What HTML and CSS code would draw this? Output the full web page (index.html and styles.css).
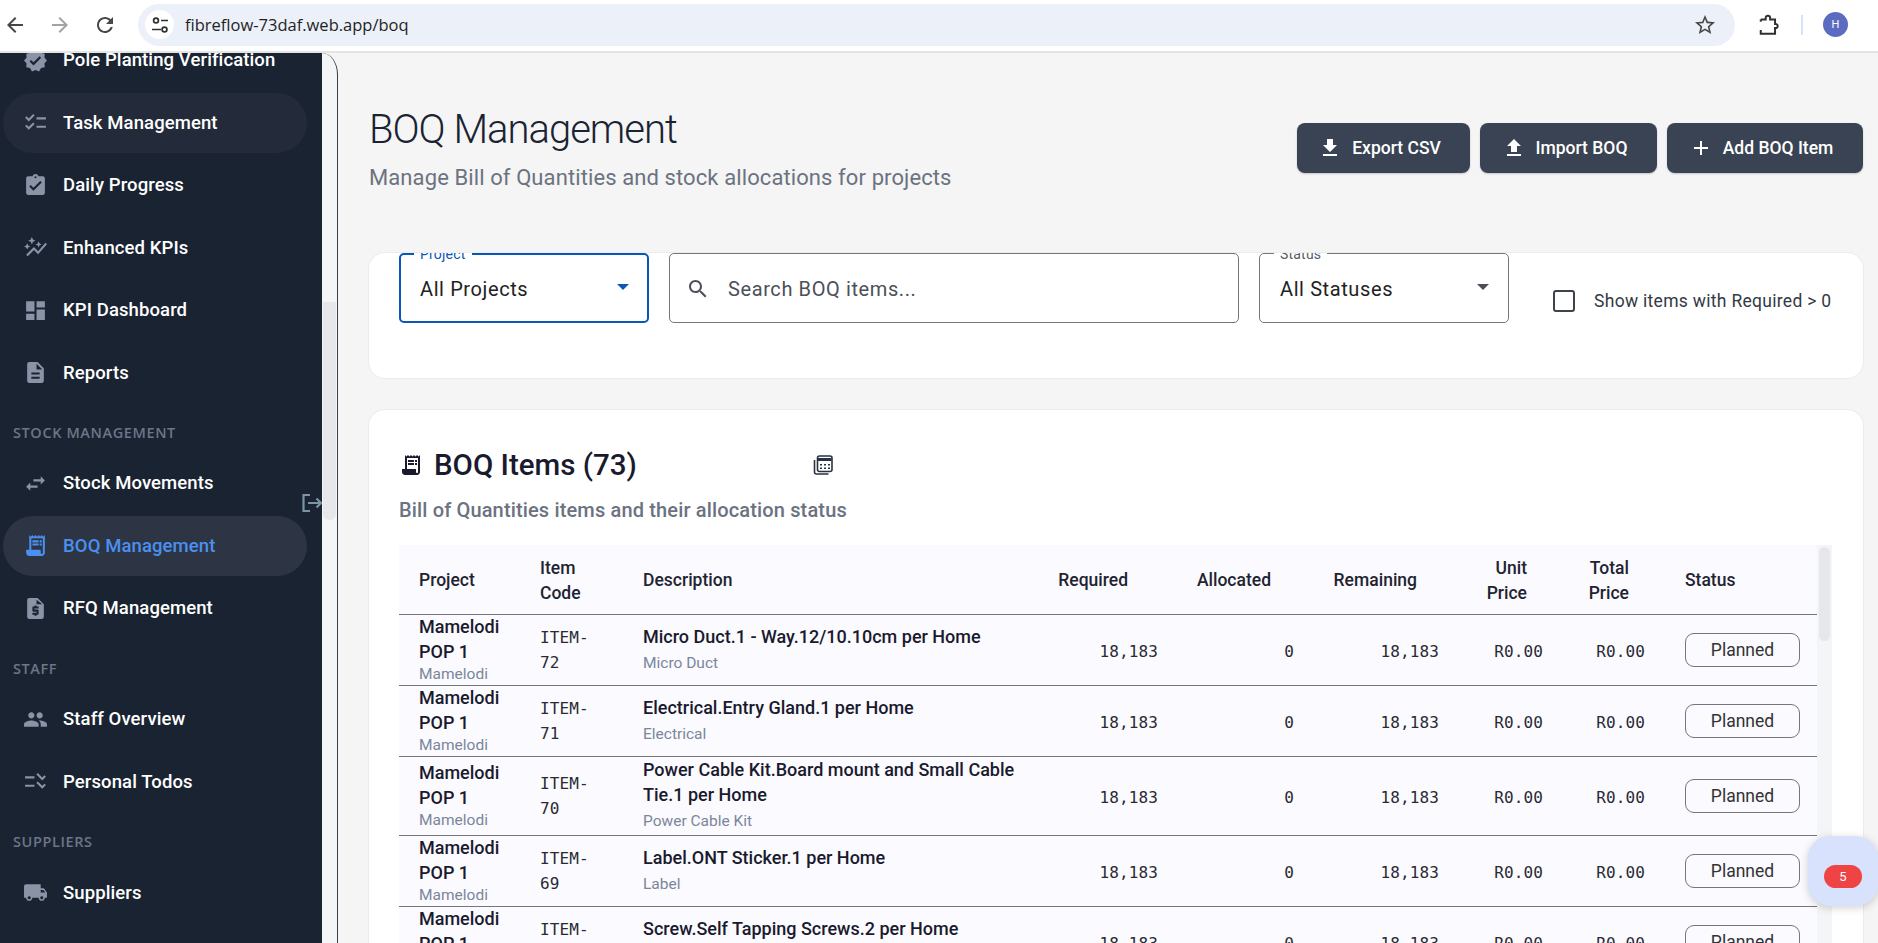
FILE: index.html
```html
<!DOCTYPE html>
<html lang="en">
<head>
<meta charset="utf-8">
<title>BOQ Management</title>
<link rel="stylesheet" href="styles.css">
</head>
<body>
<svg class="defs" width="0" height="0" aria-hidden="true">
  <symbol id="i-verified" viewBox="0 0 24 24"><path d="M23 12l-2.44-2.79.34-3.69-3.61-.82-1.89-3.2L12 2.96 8.6 1.5 6.71 4.69 3.1 5.5l.34 3.7L1 12l2.44 2.79-.34 3.7 3.61.82L8.6 22.5l3.4-1.47 3.4 1.46 1.89-3.19 3.61-.82-.34-3.69L23 12zm-12.91 4.72l-3.8-3.81 1.48-1.48 2.32 2.33 5.85-5.87 1.48 1.48-7.33 7.35z"/></symbol>
  <symbol id="i-checklist" viewBox="0 0 24 24"><path d="M22 7h-9v2h9V7zm0 8h-9v2h9v-2zM5.54 11 2 7.46l1.41-1.41 2.12 2.12 4.24-4.24 1.41 1.41L5.54 11zm0 8L2 15.46l1.41-1.41 2.12 2.12 4.24-4.24 1.41 1.41L5.54 19z"/></symbol>
  <symbol id="i-checklist-rtl" viewBox="0 0 24 24"><path transform="matrix(-1 0 0 1 24 0)" d="M22 7h-9v2h9V7zm0 8h-9v2h9v-2zM5.54 11 2 7.46l1.41-1.41 2.12 2.12 4.24-4.24 1.41 1.41L5.54 11zm0 8L2 15.46l1.41-1.41 2.12 2.12 4.24-4.24 1.41 1.41L5.54 19z"/></symbol>
  <symbol id="i-assign" viewBox="0 0 24 24"><path d="M19 3h-4.18C14.4 1.84 13.3 1 12 1c-1.3 0-2.4.84-2.82 2H5c-1.1 0-2 .9-2 2v14c0 1.1.9 2 2 2h14c1.1 0 2-.9 2-2V5c0-1.1-.9-2-2-2zm-7 0c.55 0 1 .45 1 1s-.45 1-1 1-1-.45-1-1 .45-1 1-1zm-2 14l-4-4 1.41-1.41L10 14.17l6.59-6.59L18 9l-8 8z"/></symbol>
  <symbol id="i-graph" viewBox="0 0 24 24"><path d="M14.06 9.94 12 9l2.06-.94L15 6l.94 2.06L18 9l-2.06.94L15 12zM4 14l.94-2.06L7 11l-2.06-.94L4 8l-.94 2.06L1 11l2.06.94zm4.5-5 1.09-2.41L12 5.5 9.59 4.41 8.5 2 7.41 4.41 5 5.5l2.41 1.09zm-4 11.5 6-6.01 4 4L23 8.93l-1.41-1.41-7.09 7.97-4-4L3 19z"/></symbol>
  <symbol id="i-dash" viewBox="0 0 24 24"><path d="M3 13h8V3H3v10zm0 8h8v-6H3v6zm10 0h8V11h-8v10zm0-18v6h8V3h-8z"/></symbol>
  <symbol id="i-doc" viewBox="0 0 24 24"><path d="M14 2H6c-1.1 0-1.99.9-1.99 2L4 20c0 1.1.89 2 1.99 2H18c1.1 0 2-.9 2-2V8l-6-6zm2 16H8v-2h8v2zm0-4H8v-2h8v2zm-3-5V3.5L18.5 9H13z"/></symbol>
  <symbol id="i-swap" viewBox="0 0 24 24"><path d="M6.99 11 3 15l3.99 4v-3H14v-2H6.99v-3zM21 9l-3.99-4v3H10v2h7.01v3L21 9z"/></symbol>
  <symbol id="i-receipt" viewBox="0 0 24 24"><path d="M19.5 3.5 18 2l-1.5 1.5L15 2l-1.5 1.5L12 2l-1.5 1.5L9 2 7.5 3.5 6 2v14H3v3c0 1.66 1.34 3 3 3h12c1.66 0 3-1.34 3-3V2l-1.5 1.5zM19 19c0 .55-.45 1-1 1s-1-.45-1-1v-3H8V5h11v14z"/><path d="M9 7h6v2H9zm7 0h2v2h-2zm-7 3h6v2H9zm7 0h2v2h-2z"/></symbol>
  <symbol id="i-quote" viewBox="0 0 24 24"><path d="M14 2H6c-1.1 0-1.99.9-1.99 2L4 20c0 1.1.89 2 1.99 2H18c1.1 0 2-.9 2-2V8l-6-6zm1 10h-4v1h3c.55 0 1 .45 1 1v3c0 .55-.45 1-1 1h-1v1h-2v-1H9v-2h4v-1h-3c-.55 0-1-.45-1-1v-3c0-.55.45-1 1-1h1V9h2v1h2v2zm-2-4V3.5L18.5 8H13z"/></symbol>
  <symbol id="i-people" viewBox="0 0 24 24"><path d="M16 11c1.66 0 2.99-1.34 2.99-3S17.66 5 16 5c-1.66 0-3 1.34-3 3s1.34 3 3 3zm-8 0c1.66 0 2.99-1.34 2.99-3S9.66 5 8 5C6.34 5 5 6.34 5 8s1.34 3 3 3zm0 2c-2.33 0-7 1.17-7 3.5V19h14v-2.5c0-2.33-4.67-3.5-7-3.5zm8 0c-.29 0-.62.02-.97.05 1.16.84 1.97 1.97 1.97 3.45V19h6v-2.5c0-2.33-4.67-3.5-7-3.5z"/></symbol>
  <symbol id="i-truck" viewBox="0 0 24 24"><path d="M20 8h-3V4H3c-1.1 0-2 .9-2 2v11h2c0 1.66 1.34 3 3 3s3-1.34 3-3h6c0 1.66 1.34 3 3 3s3-1.34 3-3h2v-5l-3-4zM6 18.5c-.83 0-1.5-.67-1.5-1.5s.67-1.5 1.5-1.5 1.5.67 1.5 1.5-.67 1.5-1.5 1.5zm13.5-9 1.96 2.5H17V9.5h2.5zm-1.5 9c-.83 0-1.5-.67-1.5-1.5s.67-1.5 1.5-1.5 1.5.67 1.5 1.5-.67 1.5-1.5 1.5z"/></symbol>
</svg>

<header class="browser">
  <svg class="nav-icon" viewBox="0 0 24 24"><path d="M20 11H7.83l5.59-5.59L12 4l-8 8 8 8 1.41-1.41L7.83 13H20v-2z"/></svg>
  <svg class="nav-icon nav-off" viewBox="0 0 24 24"><path d="M4 11h12.17l-5.59-5.59L12 4l8 8-8 8-1.41-1.41L16.17 13H4v-2z"/></svg>
  <svg class="nav-icon" viewBox="0 0 24 24"><path d="M17.65 6.35C16.2 4.9 14.21 4 12 4c-4.42 0-7.99 3.58-7.99 8s3.57 8 7.99 8c3.73 0 6.84-2.55 7.73-6h-2.08c-.82 2.33-3.04 4-5.65 4-3.31 0-6-2.69-6-6s2.69-6 6-6c1.66 0 3.14.69 4.22 1.78L13 11h7V4l-2.35 2.35z"/></svg>
  <div class="omnibox">
    <span class="tune">
      <svg viewBox="0 0 20 20" width="20" height="20"><circle cx="6" cy="5.5" r="2.4"/><path d="M11 5.5h7M2 14.5h9"/><circle cx="14.5" cy="14.5" r="2.4"/></svg>
    </span>
    <span class="url">fibreflow-73daf.web.app/boq</span>
    <svg class="star" viewBox="0 0 24 24"><path d="M22 9.24l-7.19-.62L12 2 9.19 8.63 2 9.24l5.46 4.73L5.82 21 12 17.27 18.18 21l-1.63-7.03L22 9.24zM12 15.4l-3.76 2.27 1-4.28-3.32-2.88 4.38-.38L12 6.1l1.71 4.04 4.38.38-3.32 2.88 1 4.28L12 15.4z"/></svg>
  </div>
  <svg class="ext" viewBox="0 0 20 20"><path d="M2.500 5H7V3.500a2 2 0 0 1 4 0V5h4.500v4.200h1.300a2 2 0 0 1 0 3.600h-1.300V18h-13v-3.500"/><path d="M2.500 5v2"/></svg>
  <span class="divider"></span>
  <span class="avatar">H</span>
</header>

<div class="app">
  <aside class="sidebar">
    <nav class="nav">
      <a class="item"><svg class="ico"><use href="#i-verified"/></svg>Pole Planting Verification</a>
      <a class="item hover"><svg class="ico"><use href="#i-checklist"/></svg>Task Management</a>
      <a class="item"><svg class="ico"><use href="#i-assign"/></svg>Daily Progress</a>
      <a class="item"><svg class="ico"><use href="#i-graph"/></svg>Enhanced KPIs</a>
      <a class="item"><svg class="ico"><use href="#i-dash"/></svg>KPI Dashboard</a>
      <a class="item"><svg class="ico"><use href="#i-doc"/></svg>Reports</a>
      <div class="section">STOCK MANAGEMENT</div>
      <a class="item"><svg class="ico"><use href="#i-swap"/></svg>Stock Movements</a>
      <a class="item active"><svg class="ico"><use href="#i-receipt"/></svg>BOQ Management</a>
      <a class="item"><svg class="ico"><use href="#i-quote"/></svg>RFQ Management</a>
      <div class="section">STAFF</div>
      <a class="item"><svg class="ico"><use href="#i-people"/></svg>Staff Overview</a>
      <a class="item"><svg class="ico"><use href="#i-checklist-rtl"/></svg>Personal Todos</a>
      <div class="section">SUPPLIERS</div>
      <a class="item"><svg class="ico"><use href="#i-truck"/></svg>Suppliers</a>
    </nav>
    <svg class="collapse" viewBox="0 0 20 20"><path d="M8 2H1.500v16H8M6 10h13M14.500 5.500 19 10l-4.500 4.500"/></svg>
  </aside>
  <div class="gutter"><span class="gutter-thumb"></span></div>

  <main class="main">
    <section class="page-head">
      <div>
        <h1 class="title">BOQ Management</h1>
        <p class="subtitle">Manage Bill of Quantities and stock allocations for projects</p>
      </div>
      <div class="actions">
        <button class="btn btn-export"><svg viewBox="0 0 24 24"><path d="M19 9h-4V3H9v6H5l7 7 7-7zM5 18v2h14v-2H5z"/></svg>Export CSV</button>
        <button class="btn btn-import"><svg viewBox="0 0 24 24"><path d="M9 16h6v-6h4l-7-7-7 7h4zm-4 2h14v2H5z"/></svg>Import BOQ</button>
        <button class="btn btn-add"><svg viewBox="0 0 24 24"><path d="M19 13h-6v6h-2v-6H5v-2h6V5h2v6h6v2z"/></svg>Add BOQ Item</button>
      </div>
    </section>

    <section class="card filters">
      <div class="field focused">
        <label class="field-label">Project</label>
        <span class="field-value">All Projects</span>
        <span class="caret"></span>
      </div>
      <div class="field search">
        <svg viewBox="0 0 24 24"><path d="M15.500 14h-.79l-.28-.27C15.410 12.590 16 11.110 16 9.500 16 5.910 13.090 3 9.500 3S3 5.910 3 9.500 5.910 16 9.500 16c1.610 0 3.090-.59 4.230-1.570l.27.28v.79l5 4.990L20.490 19l-4.990-5zm-6 0C7.010 14 5 11.990 5 9.500S7.010 5 9.500 5 14 7.010 14 9.500 11.990 14 9.500 14z"/></svg>
        <span class="placeholder">Search BOQ items...</span>
      </div>
      <div class="field">
        <label class="field-label">Status</label>
        <span class="field-value">All Statuses</span>
        <span class="caret"></span>
      </div>
      <div class="check">
        <span class="box"></span>
        <span>Show items with Required &gt; 0</span>
      </div>
    </section>

    <section class="card items">
      <div class="items-head">
        <svg class="book"><use href="#i-receipt"/></svg>
        <h2>BOQ Items (73)</h2>
        <svg class="calc" viewBox="0 0 20 20"><path class="calc-back" d="M1.500 5v12a2 2 0 0 0 2 2h12"/><rect class="calc-body" x="4.500" y="1" width="14.500" height="15.500" rx="2"/><path class="calc-band" d="M5 4.500h13.500"/><path class="calc-keys" d="M7 9h2v1.500H7zM11 9h2v1.500h-2zM15 9h2v1.500h-2zM7 12.500h2V14H7zM11 12.500h2V14h-2zM15 12.500h2V14h-2z"/></svg>
      </div>
      <p class="items-sub">Bill of Quantities items and their allocation status</p>
      <div class="table-wrap">
        <table class="boq">
          <colgroup>
            <col class="c-project"><col class="c-code"><col class="c-desc"><col class="c-req"><col class="c-alloc"><col class="c-rem"><col class="c-unit"><col class="c-total"><col class="c-status">
          </colgroup>
          <thead>
            <tr>
              <th>Project</th><th>Item Code</th><th>Description</th>
              <th class="th-req">Required</th><th class="th-alloc">Allocated</th><th class="th-rem">Remaining</th>
              <th class="th-price">Unit Price</th><th class="th-price">Total Price</th><th>Status</th>
            </tr>
          </thead>
          <tbody>
            <tr>
              <td class="proj"><b>Mamelodi POP 1</b><small class="tight">Mamelodi</small></td>
              <td class="mono">ITEM-72</td>
              <td class="desc"><b>Micro Duct.1 - Way.12/10.10cm per Home</b><small>Micro Duct</small></td>
              <td class="mono num">18,183</td><td class="mono num">0</td><td class="mono num">18,183</td><td class="mono num">R0.00</td><td class="mono num">R0.00</td>
              <td><span class="chip">Planned</span></td>
            </tr>
            <tr>
              <td class="proj"><b>Mamelodi POP 1</b><small class="tight">Mamelodi</small></td>
              <td class="mono">ITEM-71</td>
              <td class="desc"><b>Electrical.Entry Gland.1 per Home</b><small>Electrical</small></td>
              <td class="mono num">18,183</td><td class="mono num">0</td><td class="mono num">18,183</td><td class="mono num">R0.00</td><td class="mono num">R0.00</td>
              <td><span class="chip">Planned</span></td>
            </tr>
            <tr>
              <td class="proj"><b>Mamelodi POP 1</b><small class="tight">Mamelodi</small></td>
              <td class="mono">ITEM-70</td>
              <td class="desc"><b>Power Cable Kit.Board mount and Small Cable Tie.1 per Home</b><small>Power Cable Kit</small></td>
              <td class="mono num">18,183</td><td class="mono num">0</td><td class="mono num">18,183</td><td class="mono num">R0.00</td><td class="mono num">R0.00</td>
              <td><span class="chip">Planned</span></td>
            </tr>
            <tr>
              <td class="proj"><b>Mamelodi POP 1</b><small class="tight">Mamelodi</small></td>
              <td class="mono">ITEM-69</td>
              <td class="desc"><b>Label.ONT Sticker.1 per Home</b><small>Label</small></td>
              <td class="mono num">18,183</td><td class="mono num">0</td><td class="mono num">18,183</td><td class="mono num">R0.00</td><td class="mono num">R0.00</td>
              <td><span class="chip">Planned</span></td>
            </tr>
            <tr>
              <td class="proj"><b>Mamelodi POP 1</b><small class="tight">Mamelodi</small></td>
              <td class="mono">ITEM-68</td>
              <td class="desc"><b>Screw.Self Tapping Screws.2 per Home</b><small>Screw</small></td>
              <td class="mono num">18,183</td><td class="mono num">0</td><td class="mono num">18,183</td><td class="mono num">R0.00</td><td class="mono num">R0.00</td>
              <td><span class="chip">Planned</span></td>
            </tr>
          </tbody>
        </table>
        <div class="tscroll"><span class="tscroll-thumb"></span></div>
      </div>
    </section>
  </main>
</div>

<button class="fab"><span class="badge">5</span></button>
</body>
</html>
```

FILE: styles.css
```css
* { box-sizing: border-box; }
html, body { margin: 0; height: 943px; overflow: hidden; }
body { font-family: Roboto, "Liberation Sans", sans-serif; background: #f5f5f5; color: #1a1a2e; position: relative; }
.defs { position: absolute; }
p, h1, h2 { margin: 0; }

/* browser chrome */
.browser { height: 53px; background: #fff; border-bottom: 2px solid #e4e4e4; display: flex; align-items: center; padding: 0 0 2px 3px; }
.nav-icon { width: 24px; height: 24px; fill: #474747; margin-right: 21px; flex: none; }
.nav-off { fill: #a3a3a3; }
.omnibox { width: 1597px; height: 42px; background: #ecf0f9; border-radius: 21px; display: flex; align-items: center; padding: 0 18px 0 7px; flex: none; }
.tune { width: 29px; height: 29px; background: #fff; border-radius: 50%; display: flex; align-items: center; justify-content: center; }
.tune svg { fill: none; stroke: #303030; stroke-width: 1.7; }
.url { margin-left: 11px; font: 400 16.500px "Open Sans", Roboto, sans-serif; color: #1f1f1f; flex: 1; }
.star { width: 24px; height: 24px; fill: #474747; }
.ext { width: 22px; height: 22px; margin-left: 23px; fill: none; stroke: #303030; stroke-width: 1.8; }
.divider { width: 2px; height: 20px; background: #d3e3fd; margin-left: 21px; }
.avatar { width: 25px; height: 25px; border-radius: 50%; background: #5c6bc0; color: #fff; font-size: 11px; display: flex; align-items: center; justify-content: center; margin-left: 20px; }

/* layout */
.app { display: flex; height: 890px; overflow: hidden; }
.sidebar { width: 322px; flex: none; background: #1a2332; position: relative; overflow: hidden; }
.nav { margin-top: -23px; padding: 0 15px 0 3px; }
.item { display: flex; align-items: center; height: 60px; margin-bottom: 2.500px; padding-left: 19.500px; border-radius: 30px; color: #fff; font-size: 18.500px; letter-spacing: .1px; font-weight: 500; white-space: nowrap; }
.ico { width: 25px; height: 25px; fill: #8b93a7; margin-right: 15.500px; flex: none; }
.item.hover { background: #232a39; }
.item.active { background: #2d3544; color: #4a90f0; }
.item.active .ico { fill: #4a90f0; }
.section { margin-left: -3px; padding: 17.700px 0 10.800px 13px; font: 600 14.500px/20px "Open Sans", sans-serif; letter-spacing: .6px; color: #6b7688; }
.collapse { position: absolute; right: 0; top: 440px; width: 20px; height: 20px; fill: none; stroke: #7c93a6; stroke-width: 2.200; }
.gutter { width: 16px; flex: none; background: #f4f5f7; border-right: 1px solid #3a3f47; border-top-right-radius: 24px 32px; padding: 249px 1px 0 1px; }
.gutter-thumb { display: block; height: 218px; background: #e5e7eb; border-radius: 0 0 6px 6px; }
.main { flex: 1; padding: 0 15px 0 31px; overflow: hidden; }

/* heading */
.page-head { display: flex; justify-content: space-between; align-items: center; height: 200px; padding-bottom: 7px; }
.title { font-size: 40px; line-height: 48px; font-weight: 300; letter-spacing: -1px; color: #1a2332; }
.subtitle { margin-top: 9px; font-size: 22px; line-height: 30px; color: #6b7280; letter-spacing: .1px; }
.actions { display: flex; gap: 10px; margin-bottom: 3px; }
.btn { height: 50px; border: 0; border-radius: 8px; background: #3a4354; color: #fff; font: 500 17.500px Roboto, sans-serif; display: flex; align-items: center; justify-content: center; gap: 10px; padding: 0 8px 0 0; box-shadow: 0 1px 2px rgba(0,0,0,.2); }
.btn svg { width: 24px; height: 24px; fill: #fff; flex: none; }
.btn-export { width: 173px; }
.btn-import { width: 177px; }
.btn-add { width: 196px; }

/* cards */
.card { background: #fff; box-shadow: 0 0 0 1px #ececec; border-radius: 16px; overflow: hidden; }
.filters { height: 125px; display: grid; grid-template-columns: 250px 570px 250px 304px; column-gap: 20px; padding: 0 0 0 30px; align-items: start; }
.field { height: 70px; border: 1px solid #74777f; border-radius: 5px; position: relative; display: flex; align-items: center; padding: 1px 20px 0; color: #222; }
.field.focused { border: 2px solid #0b57b5; padding: 1px 19px 0; }
.field-label { position: absolute; left: 14px; top: -10px; padding: 0 6px; background: #fff; font-size: 14px; line-height: 20px; letter-spacing: .2px; color: #555b66; }
.focused .field-label { left: 13px; top: -11px; color: #0b57b5; }
.field-value { font-size: 20px; letter-spacing: .6px; }
.caret { position: absolute; right: 19px; top: 30px; border: 6.500px solid transparent; border-top-color: #4a4f57; border-bottom: 0; }
.focused .caret { right: 18px; top: 29px; border-top-color: #0b57b5; }
.search svg { width: 24px; height: 24px; fill: #4c5058; margin-right: 18px; flex: none; margin-left: -4px; }
.placeholder { font-size: 20px; letter-spacing: .6px; color: #4c5058; }
.check { display: flex; align-items: center; margin: 37px 0 0 24px; font-size: 17.500px; color: #333a45; white-space: nowrap; letter-spacing: .3px; }
.box { width: 22px; height: 22px; border: 2px solid #3f444c; border-radius: 3px; margin-right: 19px; flex: none; }

.items { margin-top: 32px; height: 640px; padding: 38px 31px 0 30px; }
.items-head { display: flex; align-items: center; height: 34px; }
.book { width: 24px; height: 24px; fill: #1a1a2e; margin-right: 11px; flex: none; }
.items-head h2 { font-size: 29.500px; font-weight: 500; color: #1a1a2e; width: 379px; }
.calc { width: 20px; height: 20px; fill: none; stroke: #2a3240; stroke-width: 1.600; flex: none; }
.calc-band { stroke-width: 3; }
.calc-keys { fill: #2a3240; stroke: none; }
.items-sub { margin-top: 16px; font-size: 20px; line-height: 24px; letter-spacing: .15px; font-weight: 500; color: #6b7280; }

/* table */
.table-wrap { margin-top: 23px; display: flex; align-items: stretch; }
.boq { width: 1418px; table-layout: fixed; border-collapse: separate; border-spacing: 0; background: #fafaff; flex: none; font-size: 18px; }
.c-project { width: 121px; } .c-code { width: 103px; } .c-desc { width: 415px; } .c-req { width: 140px; } .c-alloc { width: 136px; } .c-rem { width: 145px; } .c-unit { width: 104px; } .c-total { width: 102px; } .c-status { width: 152px; }
.boq th { height: 70px; padding: 2px 20px 0; border-bottom: 1px solid #74757f; text-align: left; font-size: 17.500px; font-weight: 500; line-height: 25px; color: #1f2430; }
.boq .th-req { text-align: right; padding-right: 50px; padding-left: 0; }
.boq .th-alloc { text-align: right; padding-right: 43px; padding-left: 0; }
.boq .th-rem { text-align: right; padding-right: 42px; padding-left: 0; }
.boq .th-price { text-align: right; padding-right: 36px; padding-left: 0; }
.boq td { padding: 0 20px; border-bottom: 1px solid #74757f; vertical-align: middle; line-height: 25px; }
.boq td.desc { padding-right: 10px; }
.boq b { display: block; font-weight: 500; color: #1a1a2e; }
.boq .proj b { margin-top: -1px; }
.boq small { display: block; margin-top: 2px; padding-bottom: 1px; font-size: 15.500px; line-height: 25px; color: #7c869a; }
.boq small.tight { margin: 0 0 1px; padding: 0; line-height: 20px; }
.boq .mono { font: 400 16px/25px "DejaVu Sans Mono", "Liberation Mono", monospace; letter-spacing: .1px; color: #2a2a33; }
.boq .num { text-align: right; white-space: nowrap; padding-top: 2px; }
.chip { display: flex; align-items: center; justify-content: center; width: 115px; height: 34px; padding-top: 1px; border: 1px solid #74757f; border-radius: 9px; font-size: 17.500px; color: #333; }
.tscroll { width: 15px; background: #f4f5f6; padding: 2px; flex: none; }
.tscroll-thumb { display: block; height: 94px; background: #e5e7eb; border-radius: 6px; }

/* floating chat button */
.fab { position: absolute; right: 0; top: 836px; width: 70px; height: 70px; border: 0; padding: 10px 0 0; background: #d8e2fc; border-radius: 22px; box-shadow: 0 2px 8px rgba(0,0,0,.18); display: flex; align-items: center; justify-content: center; }
.badge { width: 38px; height: 23px; border-radius: 12px; background: #ef4444; color: #fff; font: 400 13px Roboto, sans-serif; display: flex; align-items: center; justify-content: center; }
```
